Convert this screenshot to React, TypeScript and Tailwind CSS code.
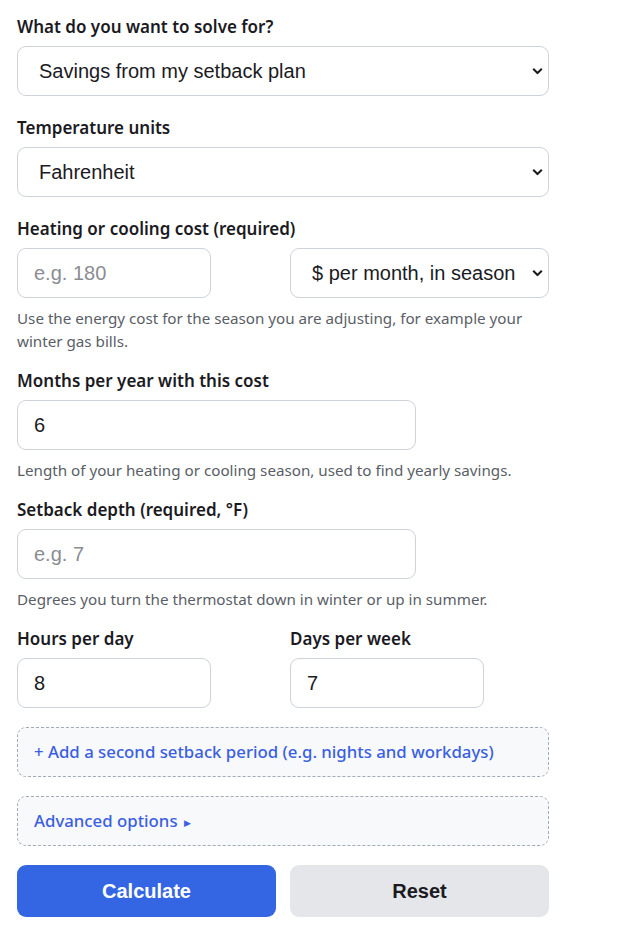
import { useState } from 'react';

// ---------------------------------------------------------------------------
// Thermostat setback savings form
// ---------------------------------------------------------------------------

const labelCls =
  "block mb-[6px] text-[17px] leading-[26px] font-semibold text-[#1b1b1f] font-['Noto_Sans',sans-serif]";
const helpCls =
  "mt-[9px] -mb-1 text-[15.2px] leading-[23px] text-[#5a5e66] font-['Noto_Sans',sans-serif]";
const controlCls =
  "h-[50px] rounded-[9px] border border-[#cdd2db] bg-white text-[20px] text-[#1b1b1f] font-['Liberation_Sans',Arial,sans-serif] outline-none";
const dashedCls =
  "h-[50px] rounded-[9px] border border-dashed border-[#a3abb8] bg-[#f8f9fb] px-4 text-left text-[16.8px] font-medium text-[#3b5fe0] font-['Noto_Sans',sans-serif]";

function Chevron() {
  return (
    <svg
      className="pointer-events-none absolute right-[6px] top-1/2 -translate-y-1/2"
      width="11"
      height="7"
      viewBox="0 0 11 7"
      fill="none"
    >
      <path d="M1.2 1.2 5.5 5.5 9.8 1.2" stroke="#1b1b1f" strokeWidth="2" />
    </svg>
  );
}

function Select({ value, options }: { value: string; options: string[] }) {
  const [v, setV] = useState(value);
  return (
    <div className="relative w-full">
      <select
        value={v}
        onChange={(e) => setV(e.target.value)}
        className={`${controlCls} block w-full appearance-none pl-[21px] pr-8`}
      >
        {options.map((o) => (
          <option key={o}>{o}</option>
        ))}
      </select>
      <Chevron />
    </div>
  );
}

function Input({ value, placeholder }: { value?: string; placeholder?: string }) {
  const [v, setV] = useState(value ?? '');
  return (
    <input
      type="text"
      value={v}
      placeholder={placeholder}
      onChange={(e) => setV(e.target.value)}
      className={`${controlCls} block w-3/4 px-4 placeholder:text-[#8a8d93]`}
    />
  );
}

export default function App() {
  const [advanced, setAdvanced] = useState(false);

  return (
    <div className="w-[532px] ml-[17px] pt-[14px] pb-8 flex flex-col gap-[19px] bg-white">
      <div>
        <label className={labelCls}>What do you want to solve for?</label>
        <Select
          value="Savings from my setback plan"
          options={['Savings from my setback plan', 'Setback needed for a savings goal']}
        />
      </div>

      <div>
        <label className={labelCls}>Temperature units</label>
        <Select value="Fahrenheit" options={['Fahrenheit', 'Celsius']} />
      </div>

      <div>
        <label className={labelCls}>Heating or cooling cost (required)</label>
        <div className="grid grid-cols-2 gap-[14px]">
          <Input placeholder="e.g. 180" />
          <Select
            value="$ per month, in season"
            options={['$ per month, in season', '$ per year']}
          />
        </div>
        <p className={helpCls}>
          Use the energy cost for the season you are adjusting, for example your
          winter gas bills.
        </p>
      </div>

      <div>
        <label className={labelCls}>Months per year with this cost</label>
        <Input value="6" />
        <p className={helpCls}>
          Length of your heating or cooling season, used to find yearly savings.
        </p>
      </div>

      <div>
        <label className={labelCls}>Setback depth (required, °F)</label>
        <Input placeholder="e.g. 7" />
        <p className={helpCls}>
          Degrees you turn the thermostat down in winter or up in summer.
        </p>
      </div>

      <div className="grid grid-cols-2 gap-[14px]">
        <div>
          <label className={labelCls}>Hours per day</label>
          <Input value="8" />
        </div>
        <div>
          <label className={labelCls}>Days per week</label>
          <Input value="7" />
        </div>
      </div>

      <button type="button" className={dashedCls}>
        + Add a second setback period (e.g. nights and workdays)
      </button>

      <button type="button" onClick={() => setAdvanced(!advanced)} className={dashedCls}>
        Advanced options{' '}
        <span className="ml-0.5 text-[9px] align-middle">{advanced ? '▼' : '▶'}</span>
      </button>

      <div className="grid grid-cols-2 gap-[14px]">
        <button
          type="button"
          className="h-[52px] rounded-[9px] bg-[#3465e3] text-[20px] font-bold text-white font-['Liberation_Sans',Arial,sans-serif]"
        >
          Calculate
        </button>
        <button
          type="button"
          className="h-[52px] rounded-[9px] bg-[#e5e6ea] text-[20px] font-bold text-[#1b1b1f] font-['Liberation_Sans',Arial,sans-serif]"
        >
          Reset
        </button>
      </div>
    </div>
  );
}
